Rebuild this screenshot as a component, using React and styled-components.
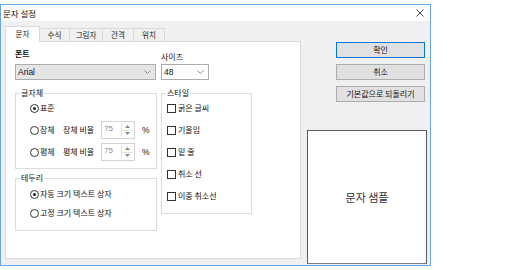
import React from "react";
import styled, { createGlobalStyle, css } from "styled-components";

const GlobalStyle = createGlobalStyle`
  html, body { margin: 0; padding: 0; background: #ffffff; }
  body {
    font-family: "Noto Sans CJK KR", "Noto Sans", sans-serif;
    font-size: 8px;
    color: #1a1a1a;
  }
  * { box-sizing: border-box; }
`;

const Window = styled.div`
  margin-top: 4px;
  width: 431px;
  height: 262px;
  border: 1px solid #63a7e6;
  background: #f0f0f0;
  display: flex;
  flex-direction: column;
`;

const TitleBar = styled.div`
  height: 16px;
  background: #ffffff;
  display: flex;
  align-items: center;
  justify-content: space-between;
  padding: 0 6px 0 2px;
`;

const Title = styled.span`
  font-size: 8.5px;
  line-height: 12px;
  color: #111;
`;

const Close = styled.span`
  display: flex;
  width: 8px;
  height: 8px;
`;

const Body = styled.div`
  flex: 1;
  display: flex;
  gap: 6px;
  padding: 5px 3px 6px 4px;
  min-height: 0;
`;

const LeftCol = styled.div`
  width: 296px;
  display: flex;
  flex-direction: column;
`;

const TabRow = styled.div`
  display: flex;
  align-items: flex-end;
  height: 15px;
  position: relative;
  z-index: 1;
`;

const Tab = styled.div`
  width: ${(p) => p.$w}px;
  height: 13px;
  margin-left: -1px;
  border: 1px solid #d9d9d9;
  border-bottom: none;
  background: #f0f0f0;
  display: flex;
  align-items: center;
  justify-content: center;
  font-size: 7.5px;
  line-height: 10px;
  color: #222;
  &:first-child { margin-left: 0; }
  ${(p) =>
    p.$active &&
    css`
      height: 16px;
      margin-bottom: -1px;
      background: #ffffff;
      padding-bottom: 2px;
    `}
`;

const Panel = styled.div`
  flex: 1;
  background: #ffffff;
  border: 1px solid #d9d9d9;
  display: flex;
  gap: 4px;
  padding: 6px 0 0 9px;
`;

const FieldColumn = styled.div`
  display: flex;
  flex-direction: column;
  width: ${(p) => p.$w}px;
`;

const FieldLabel = styled.div`
  line-height: 12px;
  font-size: 8px;
  font-weight: ${(p) => (p.$bold ? 700 : 400)};
  margin-top: ${(p) => p.$mt || 0}px;
  color: #111;
`;

const Select = styled.div`
  margin-top: ${(p) => p.$mt}px;
  width: ${(p) => p.$w}px;
  height: 16px;
  border: 1px solid #adadad;
  background: ${(p) => (p.$gray ? "#e5e5e5" : "#ffffff")};
  display: flex;
  align-items: center;
  justify-content: space-between;
  padding: 0 4px 0 2px;
  font-family: "Liberation Sans", Arial, sans-serif;
  font-size: 8.5px;
  color: #111;
`;

const Chevron = () => (
  <svg width="7" height="4" viewBox="0 0 7 4">
    <path d="M0.5 0.5 L3.5 3.5 L6.5 0.5" fill="none" stroke="#7a7a7a" strokeWidth="0.9" />
  </svg>
);

const Group = styled.fieldset`
  margin: ${(p) => p.$mt}px 0 0 0;
  padding: 0;
  border: 1px solid #dcdcdc;
  min-width: 0;
`;

const Legend = styled.legend`
  margin-left: 4px;
  padding: 0 1px;
  font-size: 8px;
  line-height: 10px;
  color: #111;
`;

const GroupBody = styled.div`
  display: flex;
  flex-direction: column;
  gap: ${(p) => p.$gap}px;
  padding: ${(p) => p.$pt}px 0 ${(p) => p.$pb}px ${(p) => p.$pl}px;
`;

const OptionRow = styled.div`
  height: 12px;
  display: flex;
  align-items: center;
  line-height: 12px;
  color: #111;
`;

const RadioDot = styled.span`
  width: 9px;
  height: 9px;
  border-radius: 50%;
  border: 1px solid #333;
  background: #fff;
  display: flex;
  align-items: center;
  justify-content: center;
  flex-shrink: 0;
  margin-right: 1px;
  &::after {
    content: "";
    width: 3px;
    height: 3px;
    border-radius: 50%;
    background: ${(p) => (p.$on ? "#222" : "transparent")};
  }
`;

const CheckBox = styled.span`
  width: 9px;
  height: 9px;
  border: 1px solid #333;
  background: #fff;
  flex-shrink: 0;
  margin-right: 2px;
`;

const OptionText = styled.span`
  width: ${(p) => (p.$w ? `${p.$w}px` : "auto")};
`;

const RatioLabel = styled.span`
  width: 38px;
`;

const Spin = styled.div`
  width: 34px;
  height: 18px;
  border: 1px solid #d4d4d4;
  background: #fff;
  display: flex;
`;

const SpinValue = styled.span`
  flex: 1;
  padding-left: 2px;
  font-family: "Liberation Sans", Arial, sans-serif;
  font-size: 8px;
  line-height: 14px;
  color: #8a8a8a;
`;

const SpinButtons = styled.div`
  width: 12px;
  border-left: 1px solid #e3e3e3;
  display: flex;
  flex-direction: column;
  margin: 1px;
  margin-left: 0;
`;

const SpinButton = styled.div`
  flex: 1;
  display: flex;
  align-items: center;
  justify-content: center;
  & + & { border-top: 1px solid #e3e3e3; }
`;

const Percent = styled.span`
  margin-left: 7px;
  font-family: "Liberation Sans", Arial, sans-serif;
  font-size: 8.5px;
`;

const RightCol = styled.div`
  width: 120px;
  display: flex;
  flex-direction: column;
`;

const Buttons = styled.div`
  margin-top: 16px;
  padding-right: 2px;
  display: flex;
  flex-direction: column;
  align-items: flex-end;
  gap: 6px;
`;

const Button = styled.div`
  width: 89px;
  height: 16px;
  background: #e1e1e1;
  border: 1px solid ${(p) => (p.$primary ? "#0078d7" : "#adadad")};
  display: flex;
  align-items: center;
  justify-content: center;
  font-size: 8px;
  line-height: 10px;
  color: #111;
`;

const Sample = styled.div`
  margin-top: 28px;
  height: 134px;
  flex-shrink: 0;
  background: #ffffff;
  border: 1px solid #5a5a5a;
  border-bottom-color: #7a7a7a;
  display: flex;
  align-items: center;
  justify-content: center;
  font-size: 11px;
  color: #333;
`;

const Radio = ({ on, children, w }) => (
  <>
    <RadioDot $on={on} />
    <OptionText $w={w}>{children}</OptionText>
  </>
);

const Spinner = () => (
  <Spin>
    <SpinValue>75</SpinValue>
    <SpinButtons>
      <SpinButton>
        <svg width="5" height="3" viewBox="0 0 5 3"><path d="M0 3 L2.5 0 L5 3 Z" fill="#8a8a8a" /></svg>
      </SpinButton>
      <SpinButton>
        <svg width="5" height="3" viewBox="0 0 5 3"><path d="M0 0 L2.5 3 L5 0 Z" fill="#8a8a8a" /></svg>
      </SpinButton>
    </SpinButtons>
  </Spin>
);

const tabs = [
  { label: "문자", w: 35, active: true },
  { label: "수식", w: 31 },
  { label: "그림자", w: 34 },
  { label: "간격", w: 32 },
  { label: "위치", w: 32 },
];

const styles = ["굵은 글씨", "기울임", "밑 줄", "취소 선", "이중 취소선"];

export default function App() {
  return (
    <>
      <GlobalStyle />
      <Window>
        <TitleBar>
          <Title>문자 설정</Title>
          <Close>
            <svg width="8" height="8" viewBox="0 0 8 8">
              <path d="M0.5 0.5 L7.5 7.5 M7.5 0.5 L0.5 7.5" stroke="#333" strokeWidth="0.9" />
            </svg>
          </Close>
        </TitleBar>
        <Body>
          <LeftCol>
            <TabRow>
              {tabs.map((t) => (
                <Tab key={t.label} $w={t.w} $active={t.active}>
                  {t.label}
                </Tab>
              ))}
            </TabRow>
            <Panel>
              <FieldColumn $w={142}>
                <FieldLabel $bold>폰트</FieldLabel>
                <Select $mt={4} $w={141} $gray>
                  <span>Arial</span>
                  <Chevron />
                </Select>
                <Group $mt={8}>
                  <Legend>글자체</Legend>
                  <GroupBody $pt={4} $pb={10} $pl={14} $gap={10}>
                    <OptionRow>
                      <Radio on>표준</Radio>
                    </OptionRow>
                    <OptionRow>
                      <Radio w={23}>장체</Radio>
                      <RatioLabel>장체 비율</RatioLabel>
                      <Spinner />
                      <Percent>%</Percent>
                    </OptionRow>
                    <OptionRow>
                      <Radio w={23}>평체</Radio>
                      <RatioLabel>평체 비율</RatioLabel>
                      <Spinner />
                      <Percent>%</Percent>
                    </OptionRow>
                  </GroupBody>
                </Group>
                <Group $mt={4}>
                  <Legend>테두리</Legend>
                  <GroupBody $pt={5} $pb={11} $pl={14} $gap={7}>
                    <OptionRow>
                      <Radio on>자동 크기 텍스트 상자</Radio>
                    </OptionRow>
                    <OptionRow>
                      <Radio>고정 크기 텍스트 상자</Radio>
                    </OptionRow>
                  </GroupBody>
                </Group>
              </FieldColumn>
              <FieldColumn $w={91}>
                <FieldLabel $mt={3}>사이즈</FieldLabel>
                <Select $mt={1} $w={48}>
                  <span>48</span>
                  <Chevron />
                </Select>
                <Group $mt={8}>
                  <Legend>스타일</Legend>
                  <GroupBody $pt={4} $pb={11} $pl={5} $gap={10}>
                    {styles.map((s) => (
                      <OptionRow key={s}>
                        <CheckBox />
                        <OptionText>{s}</OptionText>
                      </OptionRow>
                    ))}
                  </GroupBody>
                </Group>
              </FieldColumn>
            </Panel>
          </LeftCol>
          <RightCol>
            <Buttons>
              <Button $primary>확인</Button>
              <Button>취소</Button>
              <Button>기본값으로 되돌리기</Button>
            </Buttons>
            <Sample>문자 샘플</Sample>
          </RightCol>
        </Body>
      </Window>
    </>
  );
}
